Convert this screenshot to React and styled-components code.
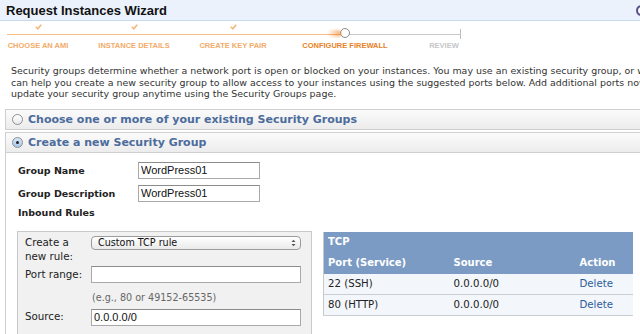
import React from 'react';
import styled, { createGlobalStyle } from 'styled-components';

const GlobalStyle = createGlobalStyle`
  body {
    margin: 0;
    background: #fff;
    overflow: hidden;
    font-family: "DejaVu Sans", Verdana, sans-serif;
    color: #333;
  }
`;

const Page = styled.div`
  width: 640px;
  height: 334px;
  overflow: hidden;
`;

const Header = styled.div`
  height: 20px;
  display: flex;
  align-items: center;
  justify-content: space-between;
  padding-left: 6px;
  background: #ebf2fc;
  border-bottom: 1px solid #c8daf1;
  overflow: hidden;
`;

const Title = styled.h1`
  margin: 0;
  font-family: "Liberation Sans", Arial, sans-serif;
  font-size: 13px;
  font-weight: bold;
  color: #111;
`;

const Close = styled.span`
  width: 7px;
  height: 7px;
  margin-right: -7px;
  border: 2px solid #5a4f8e;
  border-radius: 50%;
  background: #fff;
`;

const Steps = styled.div`
  display: grid;
  grid-template-columns: 76px 116px 82px 142px 56px;
  background: linear-gradient(
      to right,
      transparent 0 7px,
      #f7bd86 7px 326px,
      #f39a4a 340px,
      #c9c9c9 346px 460px,
      transparent 460px
    )
    0 13px / 461px 1px no-repeat;
`;

const Step = styled.div`
  display: flex;
  flex-direction: column;
  align-items: center;
`;

const Marker = styled.div`
  height: 18px;
  width: 100%;
  display: flex;
  justify-content: ${(p) => (p.$end ? 'flex-end' : 'center')};
  position: relative;
`;

const Check = styled.svg`
  margin-top: 3px;
`;

const Current = styled.span`
  width: 8px;
  height: 8px;
  margin-top: 7px;
  border: 1.5px solid #8a8a8a;
  border-radius: 50%;
  background: #fff;
  position: relative;
  &::before {
    content: '';
    position: absolute;
    right: 100%;
    top: 1px;
    width: 14px;
    height: 7px;
    border-radius: 4px;
    background: linear-gradient(to right, rgba(245, 150, 70, 0), rgba(245, 150, 70, 0.75));
    filter: blur(1px);
  }
`;

const Tick = styled.span`
  width: 1px;
  height: 10px;
  margin-top: 8px;
  margin-right: 11px;
  background: #bdbdbd;
`;

const StepLabel = styled.span`
  font-family: "Liberation Sans", Arial, sans-serif;
  font-size: 7.5px;
  font-weight: bold;
  line-height: 14px;
  white-space: nowrap;
  color: ${(p) => (p.$state === 'current' ? '#e8811f' : p.$state === 'done' ? '#f2ab68' : '#c6c6c6')};
`;

const Intro = styled.p`
  margin: 12px 0 0;
  padding-left: 11px;
  font-size: 9.45px;
  line-height: 11.5px;
  white-space: nowrap;
  color: #333;
`;

const Bar = styled.div`
  margin: ${(p) => (p.$first ? '9px' : '2px')} 0 0 5px;
  width: 700px;
  height: 21px;
  display: flex;
  align-items: center;
  gap: 5px;
  padding-left: 6px;
  border: 1px solid #cfcfcf;
  border-right: none;
  background: linear-gradient(#fbfbfb, #ececec);
  box-sizing: border-box;
`;

const Radio = styled.span`
  width: 9px;
  height: 9px;
  border: 1px solid #8e8e8e;
  border-radius: 50%;
  display: flex;
  align-items: center;
  justify-content: center;
  background: ${(p) => (p.$on ? 'linear-gradient(#d6e6fa, #a9c8ee)' : 'linear-gradient(#fff, #e9e9e9)')};
  &::after {
    content: '';
    width: 3px;
    height: 3px;
    border-radius: 50%;
    background: ${(p) => (p.$on ? '#222' : 'transparent')};
  }
`;

const BarTitle = styled.span`
  font-size: 11px;
  font-weight: bold;
  color: #4c6c9c;
  white-space: nowrap;
`;

const Section = styled.div`
  margin-left: 5px;
  border-left: 1px solid #cfcfcf;
  padding: 9px 0 0 12px;
  height: 200px;
`;

const FormRow = styled.div`
  display: flex;
  align-items: center;
  height: 17px;
  margin-bottom: ${(p) => p.$mb || 0}px;
`;

const FieldLabel = styled.label`
  width: 120px;
  font-size: 9.5px;
  font-weight: bold;
  color: #222;
  white-space: nowrap;
`;

const SubHead = styled.div`
  font-size: 9.5px;
  font-weight: bold;
  color: #222;
  line-height: 14px;
  margin-top: 4px;
`;

const TextInput = styled.input`
  display: block;
  box-sizing: border-box;
  width: ${(p) => p.$w}px;
  height: 17px;
  margin: 0;
  padding: 0 2px;
  border: 1px solid #a9a9a9;
  border-top-color: #8c8c8c;
  font-family: "Liberation Sans", Arial, sans-serif;
  font-size: 11px;
  color: #111;
  background: #fff;
`;

const Rules = styled.div`
  display: flex;
  gap: 11px;
  margin: 11px 0 0 -1px;
  align-items: flex-start;
`;

const RuleBox = styled.div`
  box-sizing: border-box;
  width: 295px;
  height: 120px;
  padding: 3px 10px 0 7px;
  background: #f1f1f1;
  border: 1px solid #c9c9c9;
  display: grid;
  grid-template-columns: 66px 210px;
  align-items: start;
`;

const RuleLabel = styled.span`
  font-size: 10.3px;
  line-height: 14px;
  color: #222;
  margin-top: ${(p) => p.$mt || 0}px;
  white-space: nowrap;
`;

const Cell = styled.div`
  margin-top: ${(p) => p.$mt || 0}px;
`;

const Select = styled.div`
  box-sizing: border-box;
  height: 14px;
  margin-top: 1px;
  display: flex;
  align-items: center;
  justify-content: space-between;
  padding: 0 4px 0 6px;
  border: 1px solid #9c9c9c;
  border-radius: 4px;
  background: linear-gradient(#fff, #eaeaea);
  font-size: 9.6px;
  color: #111;
`;

const Hint = styled.div`
  grid-column: 2;
  margin-top: ${(p) => p.$mt}px;
  padding-left: 1px;
  font-size: 9.6px;
  line-height: 14px;
  color: #666;
  white-space: nowrap;
`;

const Table = styled.table`
  width: 309px;
  margin-top: 1px;
  border-collapse: collapse;
  table-layout: fixed;
  font-size: 10.2px;
  border-left: 1px solid #c9c9c9;
`;

const Col = styled.col`
  width: ${(p) => p.$w};
`;

const Th = styled.th`
  background: #7c9bc4;
  color: #fff;
  font-size: 10px;
  font-weight: bold;
  text-align: left;
  padding: 0 0 0 4px;
  height: ${(p) => p.$h}px;
  white-space: nowrap;
`;

const Td = styled.td`
  height: 20px;
  padding: 0 0 0 4px;
  background: #f3f6fb;
  border-bottom: 1px solid #c9ced6;
  color: ${(p) => (p.$link ? '#2b5c9c' : '#222')};
  white-space: nowrap;
`;

const steps = [
  { label: 'CHOOSE AN AMI', state: 'done' },
  { label: 'INSTANCE DETAILS', state: 'done' },
  { label: 'CREATE KEY PAIR', state: 'done' },
  { label: 'CONFIGURE FIREWALL', state: 'current' },
  { label: 'REVIEW', state: 'todo' },
];

const rules = [
  { port: '22 (SSH)', source: '0.0.0.0/0' },
  { port: '80 (HTTP)', source: '0.0.0.0/0' },
];

function StepMarker({ state, last }) {
  if (state === 'done')
    return (
      <Marker>
        <Check width="7" height="6" viewBox="0 0 7 6">
          <path d="M0.8 2.8 L2.8 4.8 L6.2 0.8" fill="none" stroke="#f3b77c" strokeWidth="1.6" />
        </Check>
      </Marker>
    );
  if (state === 'current')
    return (
      <Marker>
        <Current />
      </Marker>
    );
  return <Marker $end>{last && <Tick />}</Marker>;
}

export default function App() {
  return (
    <Page>
      <GlobalStyle />
      <Header>
        <Title>Request Instances Wizard</Title>
        <Close />
      </Header>

      <Steps>
        {steps.map((s, i) => (
          <Step key={s.label}>
            <StepMarker state={s.state} last={i === steps.length - 1} />
            <StepLabel $state={s.state}>{s.label}</StepLabel>
          </Step>
        ))}
      </Steps>

      <Intro>
        Security groups determine whether a network port is open or blocked on your instances. You may use an existing security group, or we
        <br />
        can help you create a new security group to allow access to your instances using the suggested ports below. Add additional ports now or
        <br />
        update your security group anytime using the Security Groups page.
      </Intro>

      <Bar $first>
        <Radio />
        <BarTitle>Choose one or more of your existing Security Groups</BarTitle>
      </Bar>
      <Bar>
        <Radio $on />
        <BarTitle>Create a new Security Group</BarTitle>
      </Bar>

      <Section>
        <FormRow $mb={6}>
          <FieldLabel>Group Name</FieldLabel>
          <TextInput $w={122} defaultValue="WordPress01" />
        </FormRow>
        <FormRow>
          <FieldLabel>Group Description</FieldLabel>
          <TextInput $w={122} defaultValue="WordPress01" />
        </FormRow>
        <SubHead>Inbound Rules</SubHead>

        <Rules>
          <RuleBox>
            <RuleLabel>
              Create a
              <br />
              new rule:
            </RuleLabel>
            <Select>
              <span>Custom TCP rule</span>
              <svg width="5" height="8" viewBox="0 0 5 8">
                <path d="M0.5 3 L2.5 0.8 L4.5 3 Z M0.5 5 L2.5 7.2 L4.5 5 Z" fill="#555" />
              </svg>
            </Select>
            <RuleLabel $mt={1}>Port range:</RuleLabel>
            <Cell>
              <TextInput $w={210} />
            </Cell>
            <Hint $mt={4}>(e.g., 80 or 49152-65535)</Hint>
            <RuleLabel $mt={0}>Source:</RuleLabel>
            <Cell>
              <TextInput $w={210} defaultValue="0.0.0.0/0" />
            </Cell>
            <Hint $mt={2}>(e.g., 192.168.2.0/24, sg-47ad482e, or</Hint>
          </RuleBox>

          <Table>
            <colgroup>
              <Col $w="126px" />
              <Col $w="126px" />
              <Col $w="57px" />
            </colgroup>
            <thead>
              <tr>
                <Th $h={20} colSpan={3}>TCP</Th>
              </tr>
              <tr>
                <Th $h={22}>Port (Service)</Th>
                <Th $h={22}>Source</Th>
                <Th $h={22}>Action</Th>
              </tr>
            </thead>
            <tbody>
              {rules.map((r) => (
                <tr key={r.port}>
                  <Td>{r.port}</Td>
                  <Td>{r.source}</Td>
                  <Td $link>Delete</Td>
                </tr>
              ))}
            </tbody>
          </Table>
        </Rules>
      </Section>
    </Page>
  );
}
